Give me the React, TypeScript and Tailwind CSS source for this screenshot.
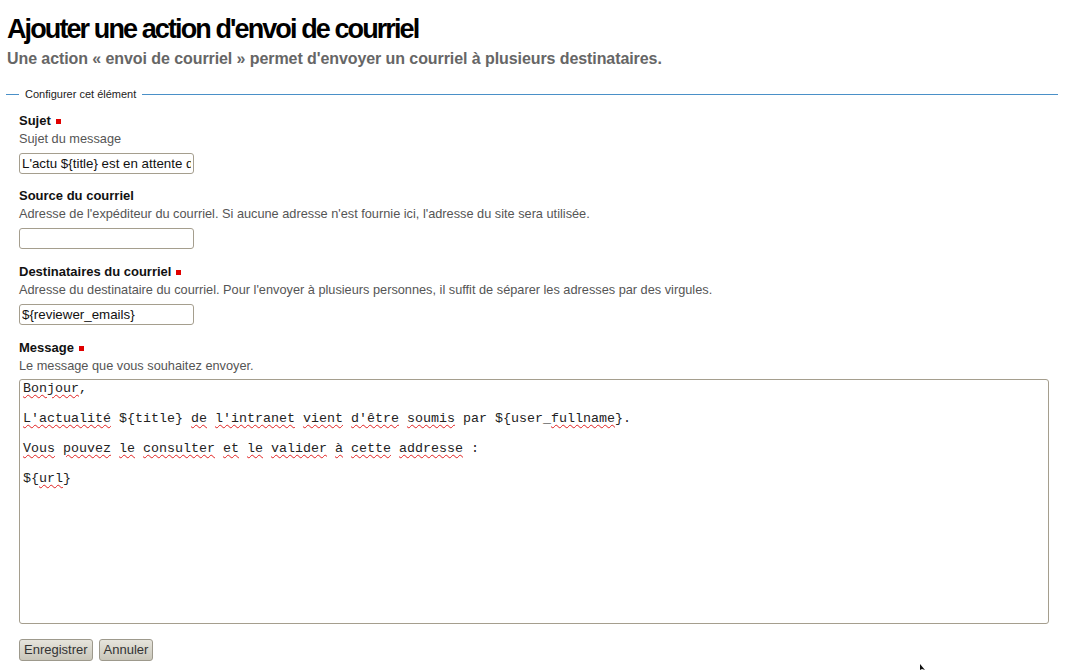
import React from "react";

const font = { fontFamily: '"Liberation Sans", Arial, sans-serif' };

function Req() {
  return <span className="ml-[5px] inline-block h-[5px] w-[5px] bg-[#e00000] align-middle" />;
}

function Field({
  label,
  help,
  required,
  tight,
  children,
}: {
  label: string;
  help: string;
  required?: boolean;
  tight?: boolean;
  children: React.ReactNode;
}) {
  return (
    <div className={tight ? "mb-[14px]" : "mb-[15px]"}>
      <div className="text-[13px] font-bold leading-[16px] text-[#111]">
        {label}
        {required && <Req />}
      </div>
      <div className="mt-[2px] text-[12.75px] leading-[16px] text-[#555]">{help}</div>
      <div className="mt-[6px]">{children}</div>
    </div>
  );
}

function W({ children }: { children: React.ReactNode }) {
  return (
    <span className="underline decoration-wavy decoration-[#e02020] decoration-1 underline-offset-[2px]">
      {children}
    </span>
  );
}

function TextInput({ value }: { value: string }) {
  return (
    <input
      readOnly
      value={value}
      className="block h-[21px] w-[175px] rounded-[3px] border border-[#a59e8e] bg-white px-[2px] text-[13.33px] leading-[18px] text-[#111] outline-none"
      style={font}
    />
  );
}

export default function App() {
  return (
    <div className="relative min-h-[670px] w-[1067px] bg-white text-[#222]" style={font}>
      <div className="pl-[7px] pt-[13px]">
        <h1 className="text-[27px] font-bold leading-[32px] tracking-[-1.9px] text-black">
          Ajouter une action d'envoi de courriel
        </h1>
        <p className="mt-[4px] text-[16px] font-bold leading-[20px] tracking-[-0.08px] text-[#666]">
          Une action « envoi de courriel » permet d'envoyer un courriel à plusieurs destinataires.
        </p>
      </div>

      <div className="ml-[6px] mr-[9px] mt-[18px]">
        <div className="flex items-center">
          <div className="h-px w-[13px] bg-[#4a90c8]" />
          <span className="px-[6px] text-[11px] leading-[14px] text-[#222]">Configurer cet élément</span>
          <div className="h-px flex-1 bg-[#4a90c8]" />
        </div>

        <div className="pl-[13px] pt-[12px] pr-[3px]">
          <Field label="Sujet" help="Sujet du message" required tight>
            <TextInput value="L'actu ${title} est en attente de validation" />
          </Field>
          <Field
            label="Source du courriel"
            help="Adresse de l'expéditeur du courriel. Si aucune adresse n'est fournie ici, l'adresse du site sera utilisée."
          >
            <TextInput value="" />
          </Field>
          <Field
            label="Destinataires du courriel"
            help="Adresse du destinataire du courriel. Pour l'envoyer à plusieurs personnes, il suffit de séparer les adresses par des virgules."
            required
          >
            <TextInput value="${reviewer_emails}" />
          </Field>
          <Field label="Message" help="Le message que vous souhaitez envoyer." required>
            <div
              className="-mt-px h-[245px] w-[1030px] whitespace-pre rounded-[3px] border border-[#a59e8e] px-[3px] pt-[1px] text-[13.33px] leading-[15px] text-[#222]"
              style={{ fontFamily: '"Liberation Mono", "Courier New", monospace' }}
            >
              <div>
                <W>Bonjour</W>,
              </div>
              <div>&nbsp;</div>
              <div>
                <W>L'actualité</W> ${"{title}"} <W>de</W> <W>l'intranet</W> <W>vient</W> <W>d'être</W>{" "}
                <W>soumis</W> par ${"{user_"}
                <W>fullname</W>
                {"}"}.
              </div>
              <div>&nbsp;</div>
              <div>
                <W>Vous</W> <W>pouvez</W> <W>le</W> <W>consulter</W> <W>et</W> <W>le</W> <W>valider</W> <W>à</W>{" "}
                <W>cette</W> <W>addresse</W> :
              </div>
              <div>&nbsp;</div>
              <div>
                ${"{"}
                <W>url</W>
                {"}"}
              </div>
            </div>
          </Field>

          <div className="mt-[2px] flex gap-[6px]">
            {["Enregistrer", "Annuler"].map((b) => (
              <button
                key={b}
                className="h-[22px] rounded-[3px] border border-[#9d998c] bg-gradient-to-b from-[#e6e4dc] to-[#c9c6ba] px-[4px] text-[13px] leading-[18px] text-[#333]"
                style={font}
              >
                {b}
              </button>
            ))}
          </div>
        </div>
      </div>

      <svg className="absolute left-[919px] top-[664px]" width="8" height="6" viewBox="0 0 8 6">
        <path d="M1 0 L1 6 L3 5 L6 6 Z" fill="#111" />
      </svg>
    </div>
  );
}
